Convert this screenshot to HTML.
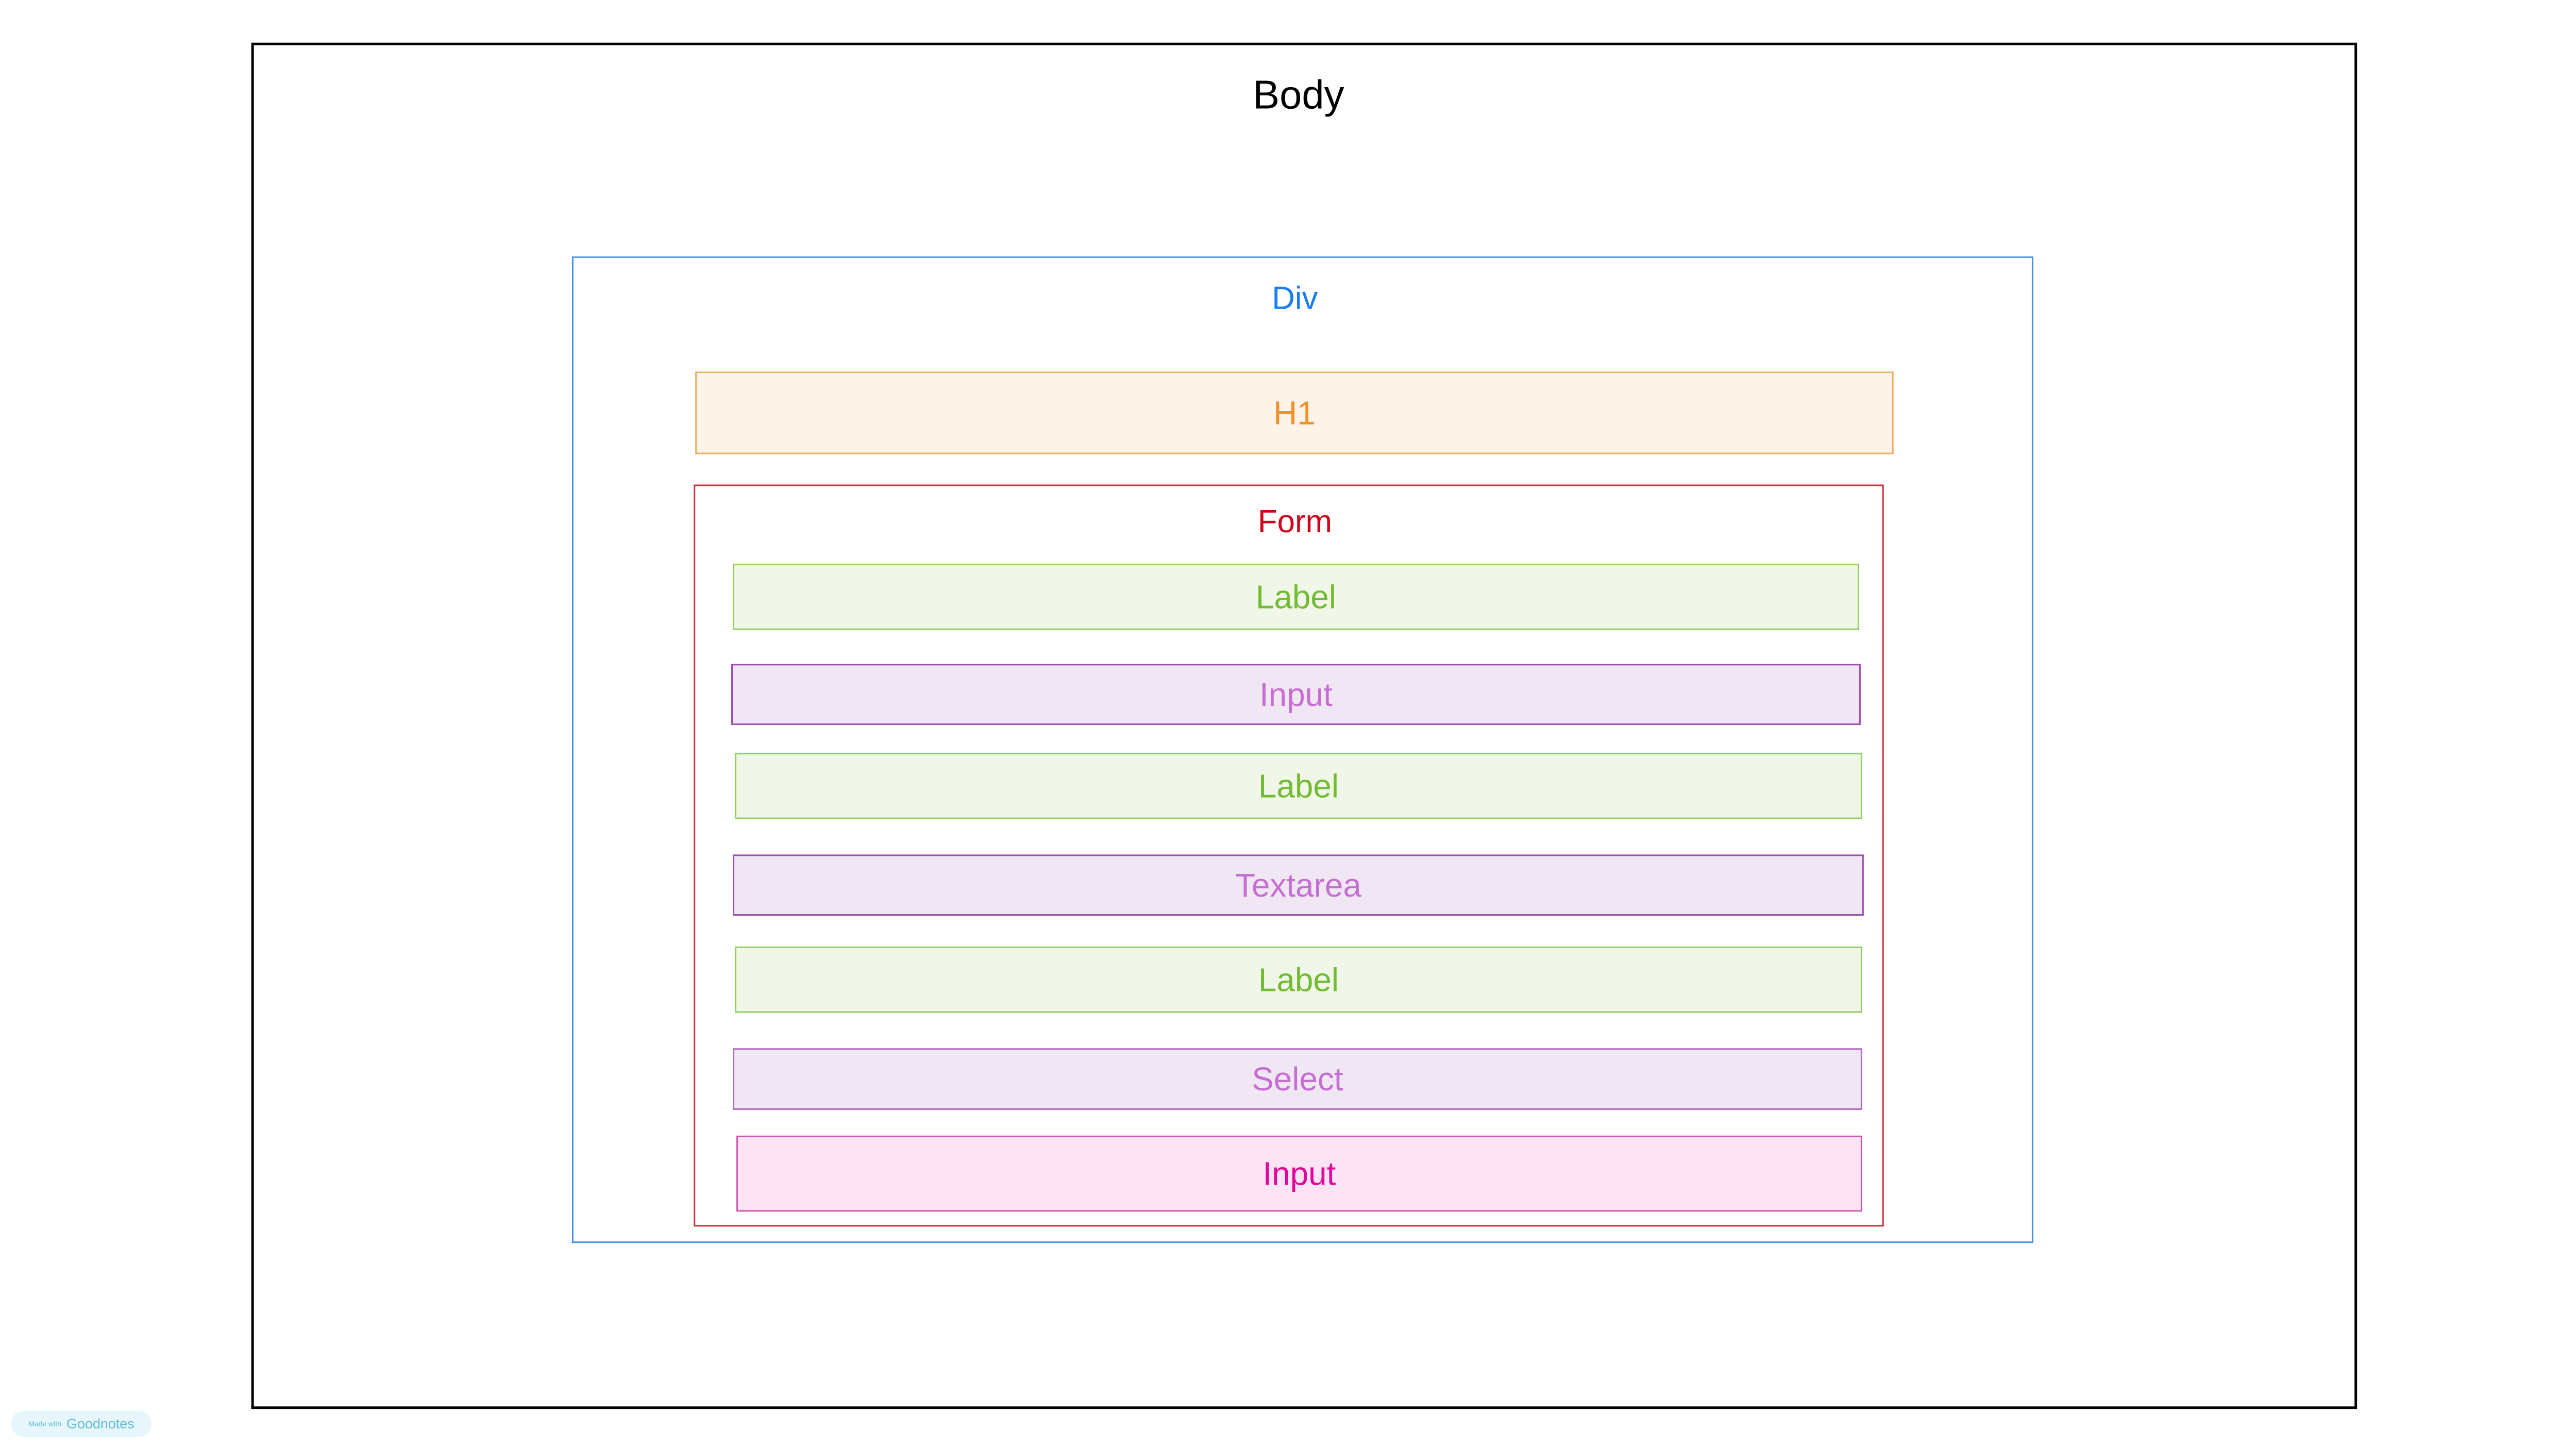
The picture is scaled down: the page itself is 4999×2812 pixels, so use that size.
<!DOCTYPE html>
<html><head><meta charset="utf-8"><style>
html,body{margin:0;padding:0;background:#fff;}
body{width:4999px;height:2812px;position:relative;overflow:hidden;font-family:"Liberation Sans",Helvetica,Arial,sans-serif;}
#w{position:absolute;left:0;top:0;width:4999px;height:2812px;transform:scale(0.9972);transform-origin:0 0;}
.b{position:absolute;box-sizing:border-box;}
.t{position:absolute;left:0;right:0;text-align:center;transform:translateY(-50%);line-height:1;}
.row{display:flex;align-items:center;justify-content:center;font-size:64px;}
.lab{background:#f0f7e9;border:3px solid #94cf62;color:#72bb32;}
.inp{background:#f1e6f3;border:3px solid #9c4fb3;color:#c56fd3;}
.inp2{background:#fde4f5;border:3px solid #d556b0;color:#e0079c;}
</style></head><body><div id="w">
<div class="b" style="left:489px;top:83px;width:4098px;height:2659px;border:5px solid #000;"></div>
<div class="t" style="top:184px;left:2027px;width:1000px;font-size:78px;color:#000;">Body</div>

<div class="b" style="left:1113px;top:499px;width:2844px;height:1920px;border:3px solid #4a90e2;"></div>
<div class="t" style="top:581px;left:2020px;width:1000px;font-size:62px;color:#1a7ef0;">Div</div>

<div class="b row" style="left:1353px;top:723px;width:2332px;height:161px;background:#fdf3e8;border:3px solid #eab064;color:#f0922a;">H1</div>

<div class="b" style="left:1350px;top:943px;width:2316px;height:1444px;border:3px solid #c8303e;"></div>
<div class="t" style="top:1016px;left:2020px;width:1000px;font-size:62px;color:#d0021b;">Form</div>

<div class="b row lab" style="left:1426px;top:1097px;width:2192px;height:129px;">Label</div>
<div class="b row inp" style="left:1423px;top:1292px;width:2198px;height:119px;">Input</div>
<div class="b row lab" style="left:1430px;top:1465px;width:2194px;height:129px;">Label</div>
<div class="b row inp" style="left:1426px;top:1663px;width:2201px;height:119px;">Textarea</div>
<div class="b row lab" style="left:1430px;top:1842px;width:2194px;height:129px;">Label</div>
<div class="b row inp" style="left:1426px;top:2040px;width:2198px;height:120px;border-color:#b06cc4;">Select</div>
<div class="b row inp2" style="left:1433px;top:2210px;width:2191px;height:148px;">Input</div>

<div class="b" style="left:22px;top:2745px;width:273px;height:52px;border-radius:26px;background:#e6f6fb;display:flex;align-items:center;justify-content:center;color:#5fbcd6;">
<span style="font-size:14px;margin-right:10px;">Made with</span><span style="font-size:27px;">Goodnotes</span></div>
</div></body></html>
